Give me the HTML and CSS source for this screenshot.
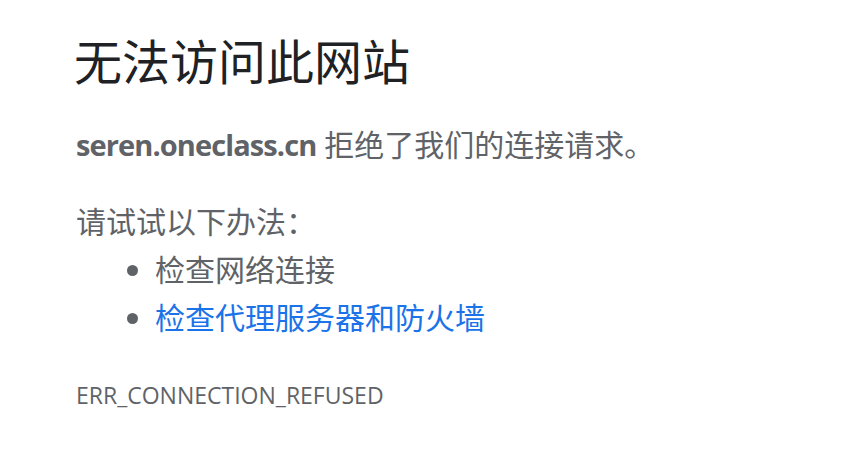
FILE: index.html
```html
<!DOCTYPE html>
<html lang="zh-CN">
<head>
<meta charset="utf-8">
<title>seren.oneclass.cn</title>
<link rel="stylesheet" href="styles.css">
</head>
<body>
<div class="wrapper">
  <h1 class="heading">无法访问此网站</h1>
  <p class="summary"><strong class="host">seren.oneclass.cn</strong> 拒绝了我们的连接请求。</p>
  <div class="suggestions">
    <p class="try">请试试以下办法：</p>
    <ul class="list">
      <li>检查网络连接</li>
      <li><a class="link" href="#">检查代理服务器和防火墙</a></li>
    </ul>
  </div>
  <div class="code">ERR_CONNECTION_REFUSED</div>
</div>
</body>
</html>
```

FILE: styles.css
```css
html, body {
  margin: 0;
  padding: 0;
  background: #ffffff;
}
body {
  font-family: "Open Sans", "Noto Sans CJK SC", sans-serif;
  color: #5f6368;
}
.wrapper {
  padding: 32px 0 0 76px;
}
.heading {
  margin: 0 0 0 -2px;
  font-size: 48px;
  font-weight: 400;
  line-height: 60px;
  color: #202124;
}
.summary {
  margin: 33px 0 0;
  font-size: 30px;
  line-height: 40px;
}
.host {
  font-weight: 700;
  font-size: 29px;
  letter-spacing: -0.9px;
}
.suggestions {
  margin-top: 33px;
}
.try {
  margin: 0;
  font-size: 30px;
  line-height: 48px;
}
.list {
  margin: 0;
  padding-left: 79px;
  font-size: 30px;
  line-height: 48px;
}
.link {
  color: #1a73e8;
  text-decoration: none;
}
.code {
  margin-top: 37px;
  font-size: 23px;
  line-height: 32px;
  color: #5f6368;
}
```
